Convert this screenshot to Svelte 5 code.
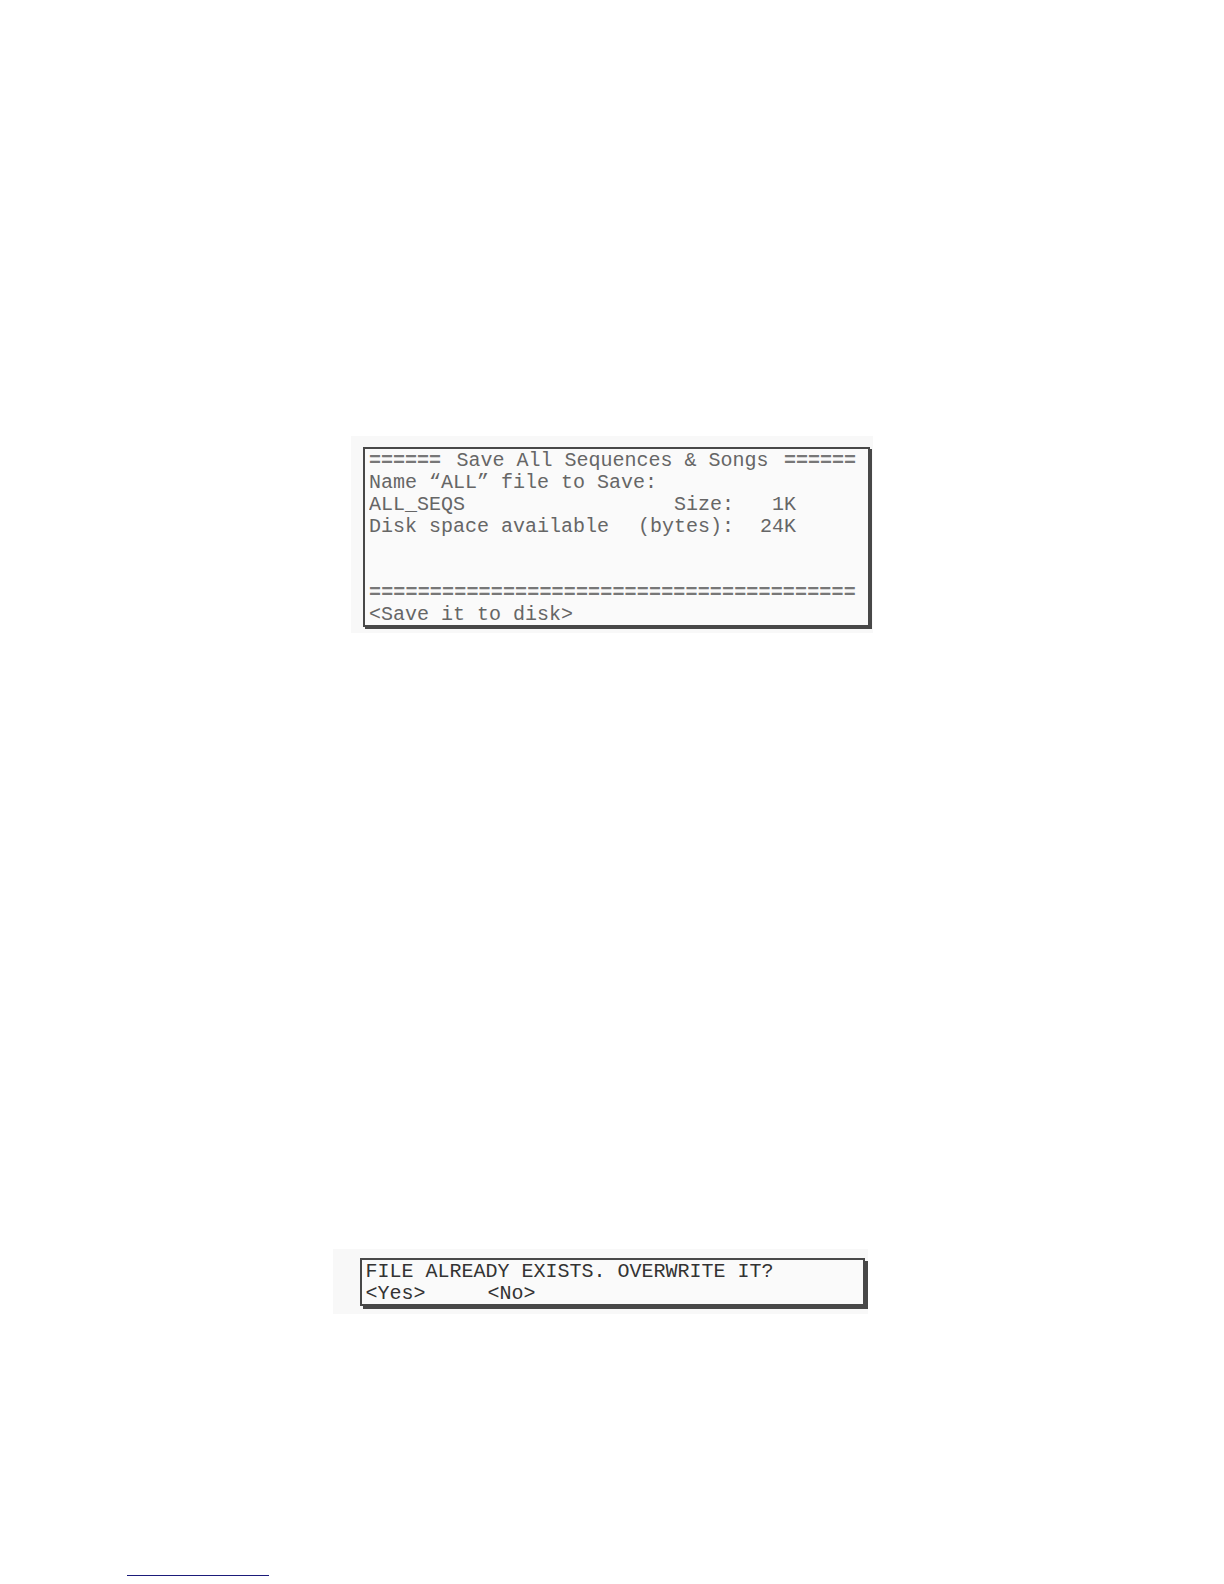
<script>
  let fileName = $state('ALL_SEQS');

  const edge = '='.repeat(6);
  const rule = Array(40).fill('=');
</script>

<main>
  <div class="panel save-panel">
    <form class="screen" onsubmit={(e) => e.preventDefault()}>
      <h2 class="row title">
        <span class="dashes">{edge}</span>
        <span>Save All Sequences &amp; Songs</span>
        <span class="dashes">{edge}</span>
      </h2>
      <label class="row" for="file-name">Name “ALL” file to Save:</label>
      <div class="row fields">
        <input id="file-name" type="text" bind:value={fileName} />
        <span>Size:</span>
        <span class="value">1K</span>
      </div>
      <div class="row fields">
        <span>Disk space available</span>
        <span>(bytes):</span>
        <span class="value">24K</span>
      </div>
      <div class="row rule dashes">
        {#each rule as dash}<span>{dash}</span>{/each}
      </div>
      <div class="row">
        <button type="submit">&lt;Save it to disk&gt;</button>
      </div>
    </form>
  </div>

  <div class="panel confirm-panel">
    <div class="screen">
      <p class="row">FILE ALREADY EXISTS. OVERWRITE IT?</p>
      <div class="row choices">
        <button type="button">&lt;Yes&gt;</button>
        <button type="button">&lt;No&gt;</button>
      </div>
    </div>
  </div>
</main>

<footer>
  <hr />
</footer>

<style>
  :global(body) {
    background: #fff;
  }

  main {
    display: flex;
    flex-direction: column;
    align-items: center;
    padding-top: 436px;
    font-family: "Liberation Mono", "Courier New", monospace;
    font-size: 20px;
    line-height: 24px;
  }

  .panel {
    box-sizing: border-box;
    width: 100%;
    background: #f8f8f8;
  }

  .save-panel {
    max-width: 522px;
    padding: 11px 3px 6px 12px;
    color: #666;
  }

  .confirm-panel {
    max-width: 535px;
    margin: 616px 24px 0 0;
    padding: 9px 3px 8px 27px;
    color: #333;
  }

  .screen {
    border: 2px solid #484848;
    box-shadow: 2px 2px 0 #484848;
    padding: 0 12px 0 4px;
    background: #fafafa;
  }

  .confirm-panel .screen {
    box-shadow: 3px 3px 0 #484848;
  }

  .row {
    display: flex;
    height: 22px;
    margin: 0;
    font-size: 20px;
    font-weight: normal;
    white-space: pre;
  }

  .title,
  .rule {
    justify-content: space-between;
  }

  .dashes {
    font-weight: bold;
    color: #777;
  }

  .fields {
    display: grid;
    grid-template-columns: 1fr auto 62px;
    padding-right: 60px;
  }

  .value {
    text-align: right;
  }

  /* two blank lines sit above the rule */
  .rule {
    margin-top: 44px;
  }

  .choices {
    gap: 62px;
  }

  input,
  button {
    min-width: 0;
    height: 24px;
    margin: 0;
    padding: 0;
    border: 0;
    background: none;
    color: inherit;
    font: inherit;
  }

  button {
    cursor: pointer;
  }

  footer {
    padding: 261px 127px 8px;
  }

  hr {
    width: 142px;
    margin: 0;
    border: 0;
    border-top: 1px solid #1b1b7a;
  }
</style>
